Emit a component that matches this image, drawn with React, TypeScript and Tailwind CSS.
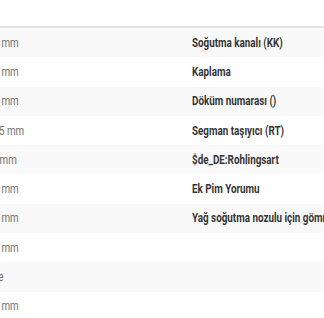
import React from "react";

const rows: { value: string; label: string }[] = [
  { value: "2,5 mm", label: "Soğutma kanalı (KK)" },
  { value: "2,5 mm", label: "Kaplama" },
  { value: "2,5 mm", label: "Döküm numarası ()" },
  { value: "2,45 mm", label: "Segman taşıyıcı (RT)" },
  { value: "25 mm", label: "$de_DE:Rohlingsart" },
  { value: "2,5 mm", label: "Ek Pim Yorumu" },
  { value: "2,5 mm", label: "Yağ soğutma nozulu için gömme deliği" },
  { value: "2,5 mm", label: "" },
  { value: "Öne", label: "" },
  { value: "2,5 mm", label: "" },
];

export default function App() {
  return (
    <div
      className="w-[324px] h-[318px] overflow-hidden bg-white"
      style={{ fontFamily: "Roboto, 'Liberation Sans', sans-serif" }}
    >
      <div className="-ml-[50px] w-[600px]">
        <div className="h-[28px] border-b-2 border-[#e3e3e3]" />
        {rows.map((r, i) => (
          <div
            key={i}
            className={`flex h-[29.3px] items-center text-[12px] leading-none ${
              i % 2 === 0 ? "bg-[#f9f9f9]" : "bg-white"
            }`}
          >
            <div className="w-[242px] shrink-0 pl-[36px] whitespace-nowrap">
              <span className="inline-block origin-left scale-x-[0.82] text-[#707070]">
                {r.value}
              </span>
            </div>
            <div className="whitespace-nowrap">
              <span className="inline-block origin-left scale-x-[0.82] font-bold text-[#363636]">
                {r.label}
              </span>
            </div>
          </div>
        ))}
      </div>
    </div>
  );
}
